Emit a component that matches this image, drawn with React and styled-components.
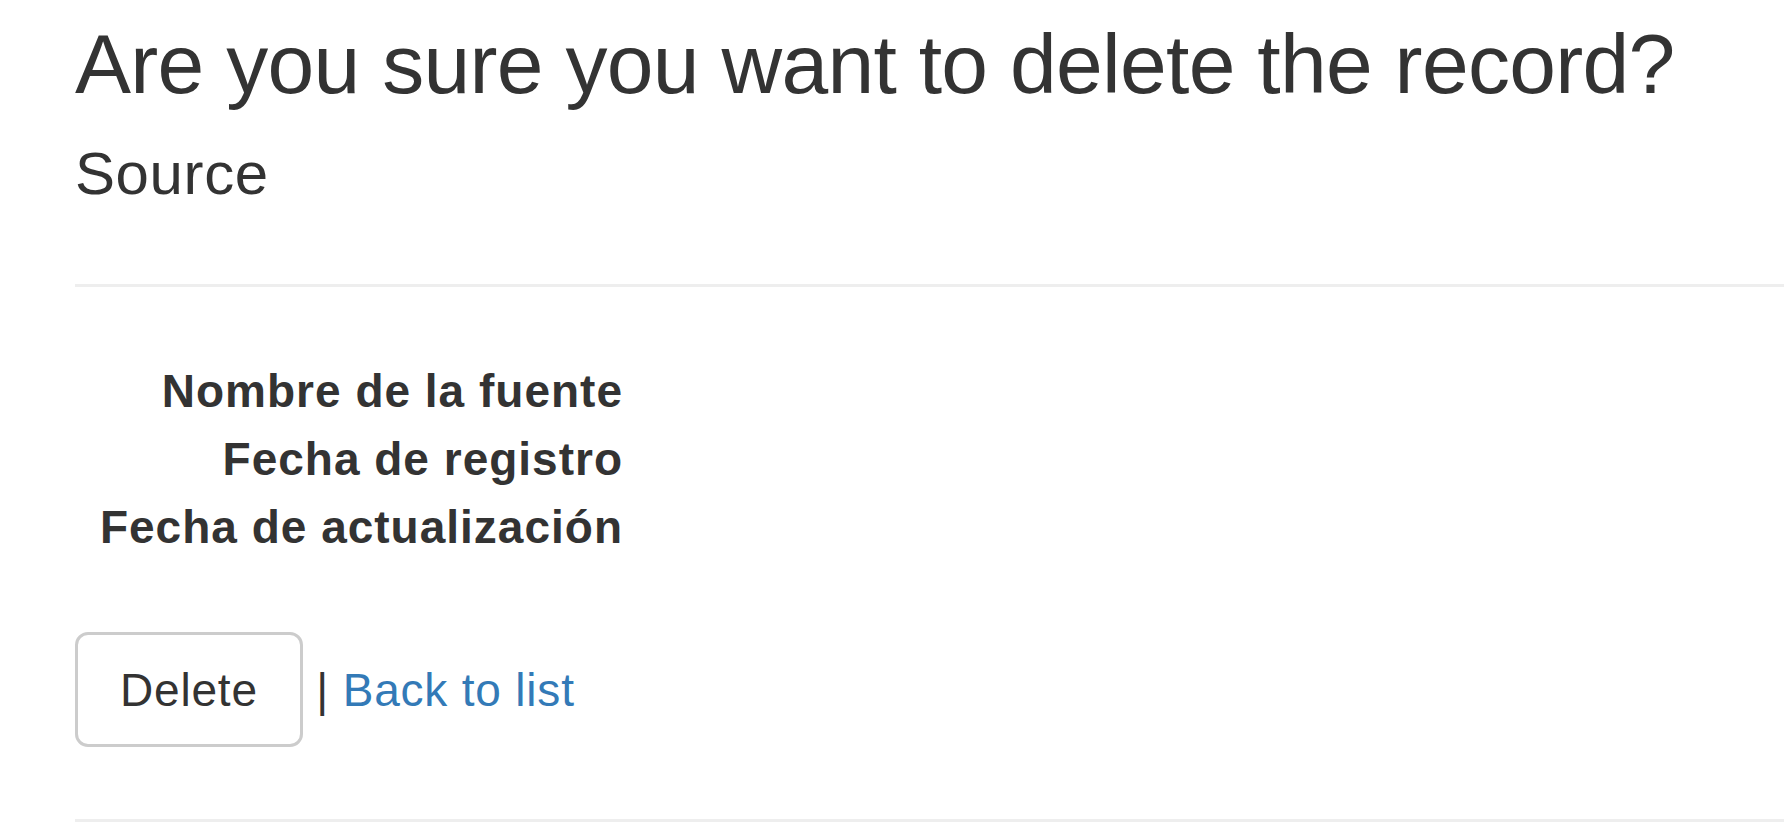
import React from 'react';
import styled, { createGlobalStyle } from 'styled-components';

const GlobalStyle = createGlobalStyle`
  html, body {
    margin: 0;
    padding: 0;
    background: #fff;
  }
  body {
    font-family: "Liberation Sans", Arial, sans-serif;
    font-size: 46px;
    line-height: 66px;
    color: #333;
  }
`;

const Page = styled.div`
  padding: 0 0 0 75px;
`;

const Title = styled.h3`
  margin: 18px 0 0 0;
  font-size: 84px;
  line-height: 1.1;
  font-weight: 400;
  letter-spacing: -0.7px;
  white-space: nowrap;
`;

const Subtitle = styled.h4`
  margin: 31px 0 0 0;
  font-size: 60px;
  line-height: 1.1;
  font-weight: 400;
  letter-spacing: 0.6px;
`;

const Rule = styled.hr`
  margin: ${(p) => p.$top}px 0 0 0;
  border: 0;
  border-top: 3px solid #eee;
  height: 0;
`;

const Details = styled.dl`
  display: grid;
  grid-template-columns: 548px 1fr;
  margin: 70px 0 0 0;
  line-height: 68px;
`;

const Term = styled.dt`
  grid-column: 1;
  text-align: right;
  font-weight: 700;
  letter-spacing: 1px;
  white-space: nowrap;
`;

const Value = styled.dd`
  grid-column: 2;
  margin: 0 0 0 66px;
`;

const Actions = styled.form`
  margin: 71px 0 0 0;
  white-space: nowrap;
  letter-spacing: 0.8px;
`;

const Button = styled.button`
  display: inline-block;
  box-sizing: border-box;
  height: 115px;
  padding: 0 42px 0 42px;
  font-family: inherit;
  font-size: 46px;
  line-height: 66px;
  letter-spacing: 0.8px;
  color: #333;
  background: #fff;
  border: 3px solid #ccc;
  border-radius: 13px;
  vertical-align: baseline;
`;

const Link = styled.a`
  color: #337ab7;
  text-decoration: none;
`;

const fields = ['Nombre de la fuente', 'Fecha de registro', 'Fecha de actualización'];

export default function App() {
  return (
    <>
      <GlobalStyle />
      <Page>
        <Title>Are you sure you want to delete the record?</Title>
        <Subtitle>Source</Subtitle>
        <Rule $top={77} />
        <Details>
          {fields.map((f) => (
            <React.Fragment key={f}>
              <Term>{f}</Term>
              <Value />
            </React.Fragment>
          ))}
        </Details>
        <Actions onSubmit={(e) => e.preventDefault()}>
          <Button type="submit">Delete</Button> | <Link href="#">Back to list</Link>
        </Actions>
        <Rule $top={72} />
      </Page>
    </>
  );
}
